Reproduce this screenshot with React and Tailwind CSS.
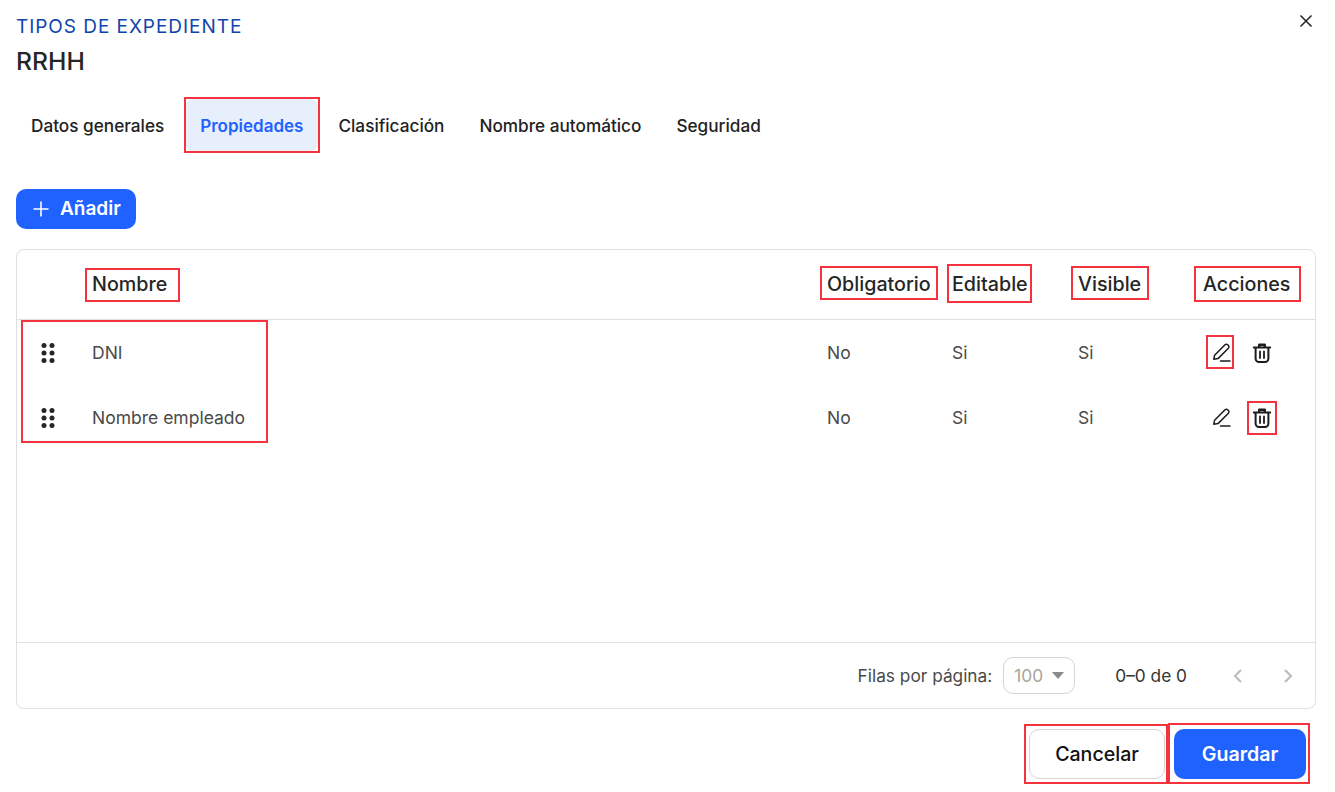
import React from 'react';

const PencilIcon = () => (
    <svg width="24" height="24" viewBox="0 0 24 24" fill="none" stroke="currentColor" strokeWidth="1.5" strokeLinejoin="round" strokeLinecap="round">
        <path d="M3.8 18.2 4.6 14.2 15 3.8a1.9 1.9 0 0 1 2.7 0l.7.7a1.9 1.9 0 0 1 0 2.7L8 17.6l-4.2.6Z" />
        <path d="M10.5 20h9.5" />
    </svg>
);

const TrashIcon = () => (
    <svg width="24" height="24" viewBox="0 0 24 24" fill="none" stroke="currentColor" strokeWidth="2" strokeLinejoin="round" strokeLinecap="round">
        <path d="M3.8 6.5h16.4" />
        <path d="M9.2 5.5V3.8h5.6v1.7" strokeWidth="2.4" />
        <path d="M5.6 7v10.5A3.5 3.5 0 0 0 9.1 21h5.8a3.5 3.5 0 0 0 3.5-3.5V7" />
        <path d="M10 10.5v6.5M14 10.5v6.5" strokeWidth="1.8" />
    </svg>
);

const DragIcon = () => (
    <svg width="16" height="24" viewBox="0 0 16 24" fill="#262626">
        <circle cx="4" cy="4.5" r="2.5" />
        <circle cx="12" cy="4.5" r="2.5" />
        <circle cx="4" cy="12" r="2.5" />
        <circle cx="12" cy="12" r="2.5" />
        <circle cx="4" cy="19.5" r="2.5" />
        <circle cx="12" cy="19.5" r="2.5" />
    </svg>
);

const Chevron = ({ d }) => (
    <svg width="24" height="24" viewBox="0 0 24 24" fill="none" stroke="#bdbdbd" strokeWidth="2.2">
        <path d={d} />
    </svg>
);

const tabs = ['Datos generales', 'Propiedades', 'Clasificación', 'Nombre automático', 'Seguridad'];

const rows = ['DNI', 'Nombre empleado'];

const columns = 'grid grid-cols-[75px_735px_125px_126px_125px_1fr]';

// red marks drawn on top of the screenshot
const marks = [
    'left-[184px] top-[97px] w-[136px] h-[56px]',
    'left-[85px] top-[268px] w-[95px] h-[34px]',
    'left-[820px] top-[266px] w-[118px] h-[34px]',
    'left-[947px] top-[264px] w-[85px] h-[39px]',
    'left-[1071px] top-[266px] w-[78px] h-[34px]',
    'left-[1194px] top-[266px] w-[107px] h-[36px]',
    'left-[21px] top-[320px] w-[247px] h-[123px]',
    'left-[1206px] top-[335px] w-[28px] h-[34px]',
    'left-[1247px] top-[401px] w-[30px] h-[34px]',
    'left-[1024px] top-[724px] w-[144px] h-[60px]',
    'left-[1168px] top-[723px] w-[142px] h-[61px]',
];

export default function App() {
    return (
        <div className="relative h-[792px] w-[1335px] overflow-hidden bg-white font-['Inter',sans-serif] text-[#222]">
            <div className="flex flex-col px-4 pt-[15px]">
                <div className="flex items-start justify-between">
                    <div>
                        <div className="text-[19px] leading-[24px] tracking-[0.95px] text-[#0f44ad]">TIPOS DE EXPEDIENTE</div>
                        <div className="mt-[8px] text-[24.7px] leading-[28px] font-medium text-[#262626]">RRHH</div>
                    </div>
                    <button className="mt-[-6px] mr-[1px] flex h-6 w-6 items-center justify-center text-[#222]">
                        <svg width="14" height="14" viewBox="0 0 14 14" stroke="currentColor" strokeWidth="1.5">
                            <path d="M1.5 1.5l11 11M12.5 1.5l-11 11" />
                        </svg>
                    </button>
                </div>

                <div className="mt-[24px] flex h-[52px] items-stretch gap-[5px]">
                    {tabs.map((tab) => (
                        <div
                            key={tab}
                            className={
                                tab === 'Propiedades'
                                    ? 'flex items-center rounded-lg bg-[#e8effc] px-[15px] pt-[3px] text-[17px] font-semibold text-[#1f62ff]'
                                    : 'flex items-center rounded-lg px-[15px] pt-[1px] text-[17.2px] font-[450] text-[#222] first:pr-[16px]'
                            }
                        >
                            {tab}
                        </div>
                    ))}
                </div>

                <button className="mt-[38px] flex h-10 w-[120px] items-center gap-[11px] rounded-[10px] bg-[#1f62ff] pl-[17px] text-[19px] font-semibold text-white">
                    <svg width="16" height="16" viewBox="0 0 16 16" stroke="currentColor" strokeWidth="1.6">
                        <path d="M8 .5v15M.5 8h15" />
                    </svg>
                    <span className="pt-px">Añadir</span>
                </button>

                <div className="mt-5 flex h-[460px] w-[1300px] flex-col rounded-lg border border-[#e0e0e0]">
                    <div className={`${columns} h-[70px] items-center border-b border-[#e0e0e0] pb-[2px] text-[19.7px] font-[450] leading-[24px] text-[#262626]`}>
                        <div />
                        <div>Nombre</div>
                        <div>Obligatorio</div>
                        <div>Editable</div>
                        <div>Visible</div>
                        <div>Acciones</div>
                    </div>

                    <div className="flex-1">
                        {rows.map((row) => (
                            <div key={row} className={`${columns} h-[65px] items-center text-[17.5px] text-[#4a4a4a]`}>
                                <div className="flex justify-center pr-[13px]">
                                    <DragIcon />
                                </div>
                                <div className="pt-px">{row}</div>
                                <div className="pt-px">No</div>
                                <div className="pt-px">Si</div>
                                <div className="pt-px">Si</div>
                                <div className="flex items-center gap-4 pl-[7px] text-[#1c1c1c]">
                                    <PencilIcon />
                                    <TrashIcon />
                                </div>
                            </div>
                        ))}
                    </div>

                    <div className="flex h-[66px] items-center justify-end border-t border-[#e0e0e0] pr-[15px] text-[17.3px] text-[#4a4a4a]">
                        <span>Filas por página:</span>
                        <div className="ml-[11px] flex h-[37px] w-[72px] items-center gap-[9px] rounded-[10px] border border-[#d8d4cf] pl-[10px] text-[#a8a39d]">
                            100
                            <svg width="12" height="7" viewBox="0 0 12 7" fill="#8a8a8a">
                                <path d="M0 0h12L6 7z" />
                            </svg>
                        </div>
                        <span className="ml-[40px] text-[#333]">0–0 de 0</span>
                        <div className="ml-[39px] flex items-center gap-[26px]">
                            <Chevron d="M15 6l-6 6 6 6" />
                            <Chevron d="M9 6l6 6-6 6" />
                        </div>
                    </div>
                </div>

                <div className="mt-5 flex justify-end gap-[9px] pr-[13px]">
                    <button className="h-[50px] w-[136px] rounded-[10px] border border-[#d8d4cf] bg-white pt-px text-[19.6px] font-medium text-[#111]">
                        Cancelar
                    </button>
                    <button className="h-[50px] w-[132px] rounded-[10px] bg-[#1f62ff] pt-px text-[19.6px] font-semibold text-white">
                        Guardar
                    </button>
                </div>
            </div>

            {marks.map((mark) => (
                <div key={mark} className={`pointer-events-none absolute border-2 border-[#f5333f] ${mark}`} />
            ))}
        </div>
    );
}
